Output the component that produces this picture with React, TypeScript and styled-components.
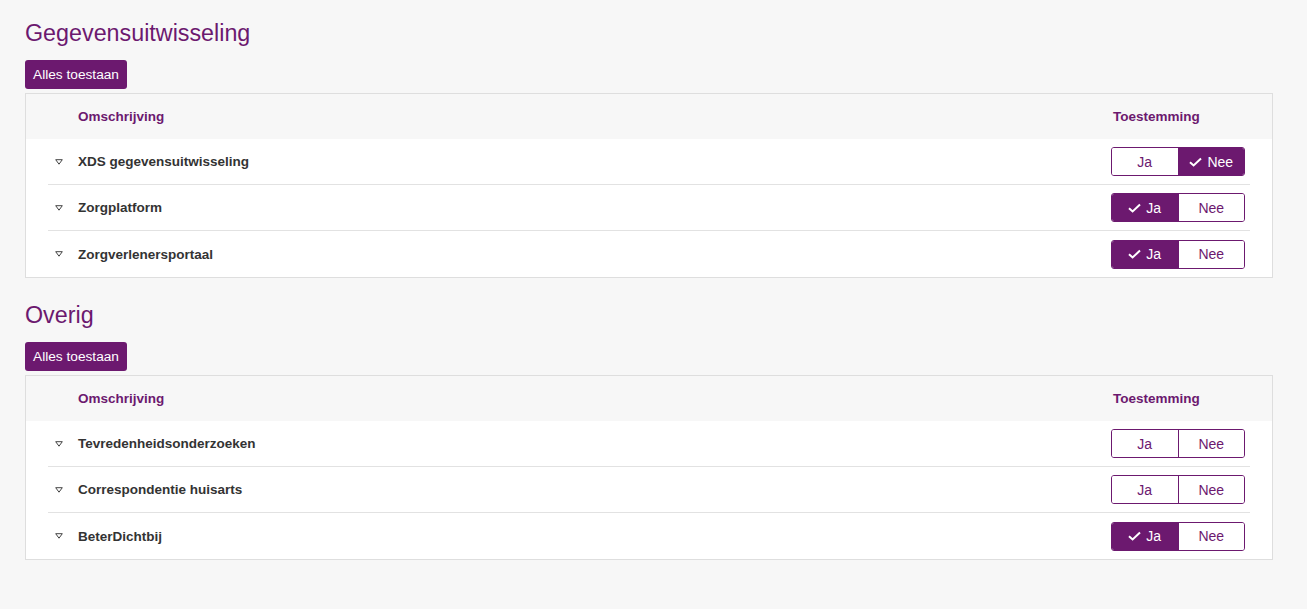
import React, { useState } from "react";
import styled, { createGlobalStyle } from "styled-components";

const purple = "#6c196f";

interface Item {
  name: string;
  value: "ja" | "nee" | null;
}

interface Section {
  title: string;
  items: Item[];
}

const initialSections: Section[] = [
  {
    title: "Gegevensuitwisseling",
    items: [
      { name: "XDS gegevensuitwisseling", value: "nee" },
      { name: "Zorgplatform", value: "ja" },
      { name: "Zorgverlenersportaal", value: "ja" },
    ],
  },
  {
    title: "Overig",
    items: [
      { name: "Tevredenheidsonderzoeken", value: null },
      { name: "Correspondentie huisarts", value: null },
      { name: "BeterDichtbij", value: "ja" },
    ],
  },
];

const GlobalStyle = createGlobalStyle`
  html, body {
    margin: 0;
    padding: 0;
    background: #f7f7f7;
    font-family: "Liberation Sans", Arial, sans-serif;
  }
`;

const Page = styled.div`
  padding: 19px 34px 40px 25px;
  min-height: 550px;
  background: #f7f7f7;
`;

const SectionBlock = styled.section`
  & + & {
    margin-top: 23px;
  }
`;

const Title = styled.h2`
  margin: 0 0 13px;
  font-size: 23.3px;
  line-height: 28px;
  font-weight: normal;
  color: ${purple};
`;

const AllButton = styled.button`
  display: block;
  height: 29px;
  padding: 0 8px;
  border: none;
  border-radius: 3px;
  background: ${purple};
  color: #fff;
  font-family: inherit;
  font-size: 13.7px;
  cursor: pointer;
  margin-bottom: 4px;
`;

const Box = styled.div`
  border: 1px solid #dedede;
  background: #f7f7f7;
`;

const HeaderRow = styled.div`
  display: grid;
  grid-template-columns: 30px 1fr 139px;
  align-items: center;
  height: 45px;
  padding: 0 22px;
`;

const HeaderCell = styled.div<{ $shift?: boolean }>`
  font-size: 13.5px;
  font-weight: bold;
  color: ${purple};
  padding-left: ${({ $shift }) => ($shift ? "2px" : "0")};
`;

const Body = styled.div`
  background: #fff;
  padding: 0 22px;
`;

const Row = styled.div`
  display: grid;
  grid-template-columns: 30px 1fr 139px;
  align-items: center;
  height: 46px;
  border-bottom: 1px solid #e2e2e2;
  box-sizing: border-box;
  &:last-child {
    border-bottom: none;
  }
`;

const Caret = styled.span`
  display: flex;
  padding-left: 7px;
`;

const Name = styled.span`
  font-size: 13.5px;
  font-weight: bold;
  color: #333;
`;

const Toggle = styled.div`
  display: flex;
  width: 134px;
  height: 29px;
  border: 1px solid ${purple};
  border-radius: 3px;
  overflow: hidden;
  box-sizing: border-box;
`;

const Option = styled.button<{ $active: boolean }>`
  flex: 1;
  display: flex;
  align-items: center;
  justify-content: center;
  gap: 5px;
  border: none;
  padding: 0;
  font-family: inherit;
  font-size: 14px;
  cursor: pointer;
  background: ${({ $active }) => ($active ? purple : "#fff")};
  color: ${({ $active }) => ($active ? "#fff" : purple)};
  & + & {
    border-left: 1px solid ${purple};
  }
`;

const Check = () => (
  <svg width="13" height="10" viewBox="0 0 13 10">
    <polyline
      points="1,5.2 4.6,8.5 12,1.5"
      fill="none"
      stroke="#fff"
      strokeWidth="2"
    />
  </svg>
);

const Triangle = () => (
  <svg width="8" height="6" viewBox="0 0 8 6">
    <polygon points="0.7,0.7 7.3,0.7 4,5.2" fill="none" stroke="#444" strokeWidth="1" />
  </svg>
);

export default function App() {
  const [sections, setSections] = useState<Section[]>(initialSections);

  const setValue = (s: number, i: number, value: "ja" | "nee") => {
    setSections((prev) =>
      prev.map((sec, si) =>
        si !== s
          ? sec
          : {
              ...sec,
              items: sec.items.map((it, ii) => (ii === i ? { ...it, value } : it)),
            },
      ),
    );
  };

  const allowAll = (s: number) => {
    setSections((prev) =>
      prev.map((sec, si) =>
        si !== s ? sec : { ...sec, items: sec.items.map((it) => ({ ...it, value: "ja" })) },
      ),
    );
  };

  return (
    <>
      <GlobalStyle />
      <Page>
        {sections.map((section, s) => (
          <SectionBlock key={section.title}>
            <Title>{section.title}</Title>
            <AllButton onClick={() => allowAll(s)}>Alles toestaan</AllButton>
            <Box>
              <HeaderRow>
                <span />
                <HeaderCell>Omschrijving</HeaderCell>
                <HeaderCell $shift>Toestemming</HeaderCell>
              </HeaderRow>
              <Body>
                {section.items.map((item, i) => (
                  <Row key={item.name}>
                    <Caret>
                      <Triangle />
                    </Caret>
                    <Name>{item.name}</Name>
                    <Toggle>
                      <Option $active={item.value === "ja"} onClick={() => setValue(s, i, "ja")}>
                        {item.value === "ja" && <Check />}
                        Ja
                      </Option>
                      <Option $active={item.value === "nee"} onClick={() => setValue(s, i, "nee")}>
                        {item.value === "nee" && <Check />}
                        Nee
                      </Option>
                    </Toggle>
                  </Row>
                ))}
              </Body>
            </Box>
          </SectionBlock>
        ))}
      </Page>
    </>
  );
}
